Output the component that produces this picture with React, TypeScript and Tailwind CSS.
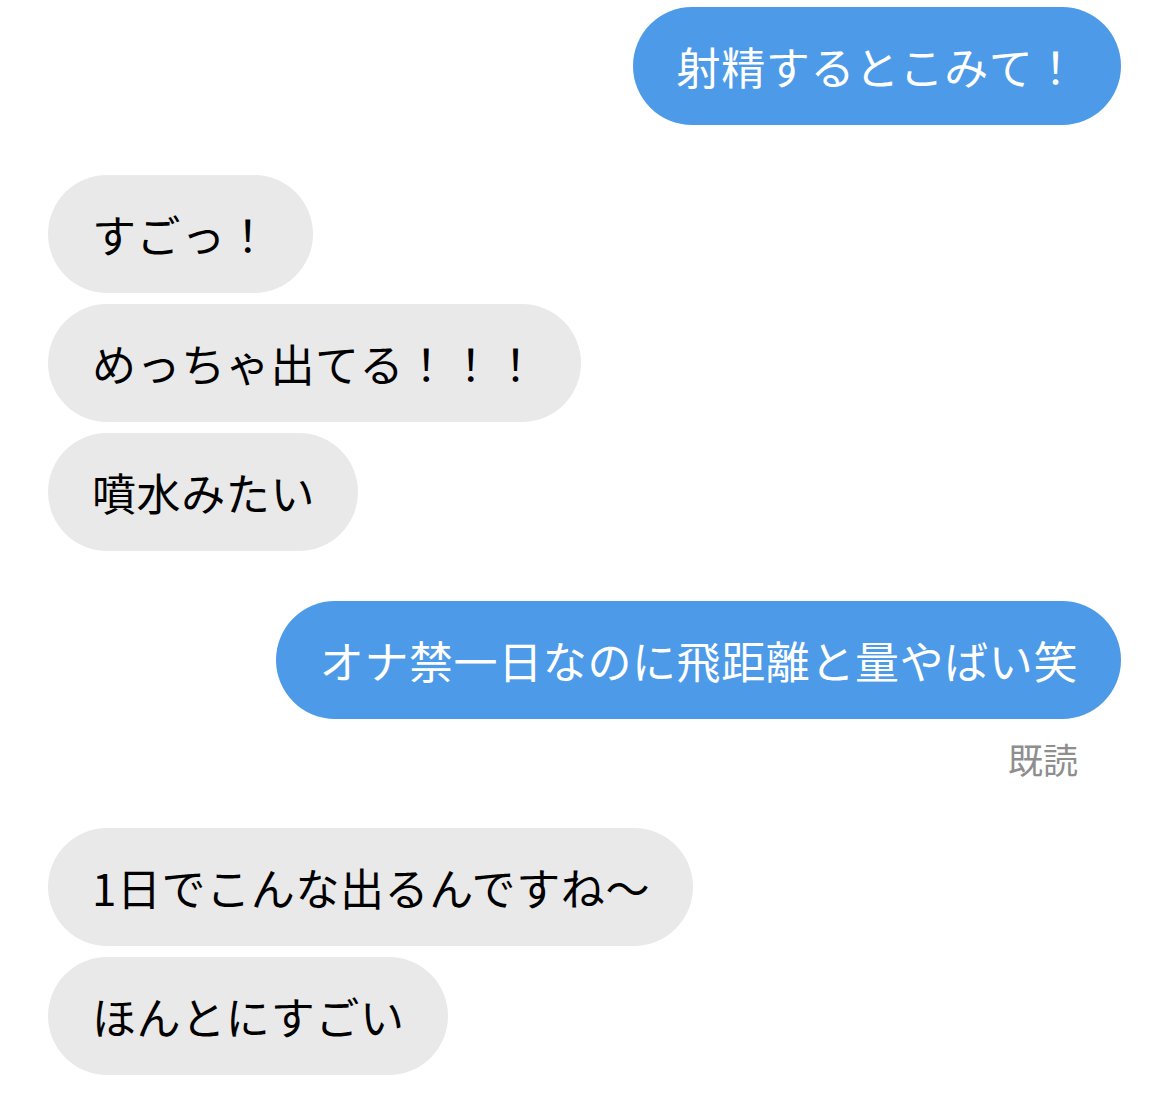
import React from 'react';

type Msg = { text: string; mine?: boolean };

const groups: { msgs: Msg[]; mine?: boolean; read?: boolean }[] = [
  { mine: true, msgs: [{ text: '射精するとこみて！' }] },
  { msgs: [{ text: 'すごっ！' }, { text: 'めっちゃ出てる！！！' }, { text: '噴水みたい' }] },
  { mine: true, read: true, msgs: [{ text: 'オナ禁一日なのに飛距離と量やばい笑' }] },
  { msgs: [{ text: '1日でこんな出るんですね〜' }, { text: 'ほんとにすごい' }] },
];

function Bubble({ text, mine }: Msg) {
  return (
    <div
      className={
        mine
          ? 'h-[118px] flex items-center rounded-full bg-[#4c9ae8] text-white pl-[44px] pr-[43px] whitespace-nowrap'
          : 'h-[118px] flex items-center rounded-full bg-[#e9e9e9] text-black pl-[44px] pr-[43px] whitespace-nowrap'
      }
    >
      {text}
    </div>
  );
}

export default function App() {
  return (
    <div
      className="w-[1170px] h-[1106px] bg-white overflow-hidden pt-[7px] pl-[48px] pr-[49px] text-[44px] leading-none tracking-[0.6px]"
      style={{ fontFamily: '"Noto Sans CJK JP", "Noto Sans", sans-serif' }}
    >
      <div className="flex flex-col gap-[50px]">
        {groups.map((g, i) => (
          <div key={i} className={g.mine ? 'flex flex-col items-end gap-[11px]' : 'flex flex-col items-start gap-[11px]'}>
            {g.msgs.map((m, j) => (
              <Bubble key={j} text={m.text} mine={g.mine} />
            ))}
            {g.read && (
              <div className="text-[35px] tracking-normal text-[#8e8e8e] pr-[43px] mt-[9px] mb-[-1px] leading-[40px]">既読</div>
            )}
          </div>
        ))}
      </div>
    </div>
  );
}
